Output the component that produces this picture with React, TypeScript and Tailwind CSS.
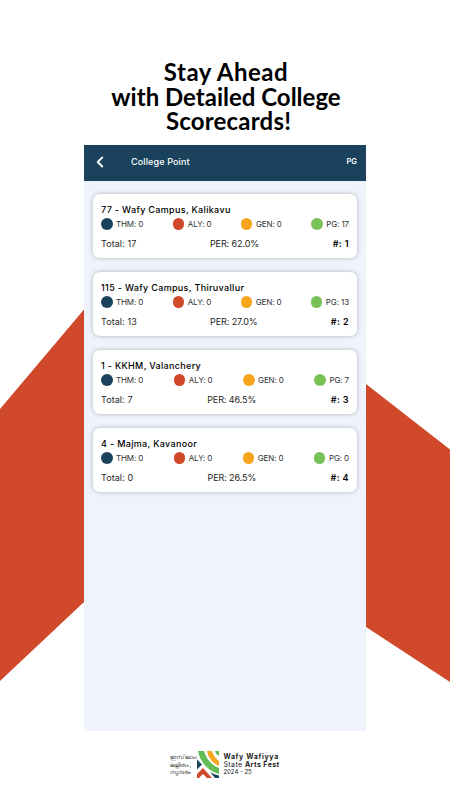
import { FiChevronLeft } from "react-icons/fi";

type College = {
  name: string;
  thm: number;
  aly: number;
  gen: number;
  pg: number;
  total: number;
  per: string;
  rank: number;
};

const colleges: College[] = [
  { name: "77 - Wafy Campus, Kalikavu", thm: 0, aly: 0, gen: 0, pg: 17, total: 17, per: "62.0%", rank: 1 },
  { name: "115 - Wafy Campus, Thiruvallur", thm: 0, aly: 0, gen: 0, pg: 13, total: 13, per: "27.0%", rank: 2 },
  { name: "1 - KKHM, Valanchery", thm: 0, aly: 0, gen: 0, pg: 7, total: 7, per: "46.5%", rank: 3 },
  { name: "4 - Majma, Kavanoor", thm: 0, aly: 0, gen: 0, pg: 0, total: 0, per: "26.5%", rank: 4 },
];

function Score({ color, label, value }: { color: string; label: string; value: number }) {
  return (
    <div className="flex items-center gap-[3.5px]">
      <span className={`size-[11.5px] rounded-full ${color}`} />
      <span className="text-[8px] leading-3 tracking-[-0.12px] text-[#303030]">
        {label}: {value}
      </span>
    </div>
  );
}

function CollegeCard({ college }: { college: College }) {
  return (
    <div className="h-16 rounded-[7px] bg-white px-2 pt-[9px] shadow-[0_0_5px_rgba(0,0,0,0.25)]">
      <h2 className="text-[9px] font-medium leading-[13px] tracking-[0.33px] text-black">{college.name}</h2>
      <div className="mt-[2px] flex h-3 items-center justify-between">
        <Score color="bg-[#1a425d]" label="THM" value={college.thm} />
        <Score color="bg-[#d0492b]" label="ALY" value={college.aly} />
        <Score color="bg-[#f6a51d]" label="GEN" value={college.gen} />
        <Score color="bg-[#77c157]" label="PG" value={college.pg} />
      </div>
      <div className="mt-[7px] flex justify-between text-[9px] leading-[13px] text-[#252525]">
        <span className="tracking-[0.08px]">Total: {college.total}</span>
        <span className="tracking-[-0.1px]">PER: {college.per}</span>
        <span className="font-semibold tracking-[0.4px] text-black">#: {college.rank}</span>
      </div>
    </div>
  );
}

function Logo() {
  return (
    <svg className="h-[27px] w-[22px]" viewBox="0 0 22 27">
      <path d="M0 8.500l5 5-5 5z" fill="#1a425d" />
      <path d="M1 0h6c2 7 7 14 15 17v6C11 20 3 11 1 0z" fill="#62bd55" />
      <path d="M10 0h5c1 4 4 8 7 10v5C15 12 11 6 10 0z" fill="#f6a51d" />
      <path d="M18 0h4v5c-2-1-3.500-3-4-5z" fill="#62bd55" />
      <path d="M0 27v-4l6-6 9 10h-5l-4-4-4 4z" fill="#d0492b" />
      <path d="M13 21c3 2 6 3 9 3.500V27h-4z" fill="#1a425d" />
    </svg>
  );
}

export default function App() {
  return (
    <main className="relative flex h-[800px] w-[450px] flex-col items-center overflow-hidden bg-white font-['Inter',sans-serif]">
      {/* red shapes behind the phone screen */}
      <svg className="absolute inset-0 h-full w-full" viewBox="0 0 450 800">
        <path d="M0 409 84 309.5V602L0 681zM366 384l84 65.5V682l-84-55z" fill="#d0492b" />
      </svg>

      <h1 className="relative mt-[60px] h-[85px] pl-[2px] text-center font-['Lato',sans-serif] text-[24px] font-bold leading-[24.5px] text-black">
        <span className="tracking-[0.5px]">Stay Ahead</span>
        <br />
        with Detailed College
        <br />
        <span className="pl-[5px] tracking-[0.2px]">Scorecards!</span>
      </h1>

      <section className="relative h-[586px] w-[282px] bg-[#eff3fb]">
        <header className="flex h-9 items-center bg-[#1a425d] pb-[2px] pl-[7px] pr-[9px] text-white">
          <FiChevronLeft className="size-[18px] stroke-[2.5]" />
          <span className="ml-[22px] text-[9px] font-medium tracking-[0.13px]">College Point</span>
          <span className="ml-auto text-[7.5px] font-semibold">PG</span>
        </header>
        <div className="flex flex-col gap-[14px] px-[9px] pt-[13px]">
          {colleges.map((college) => (
            <CollegeCard key={college.rank} college={college} />
          ))}
        </div>
      </section>

      <footer className="relative mt-5 flex items-center">
        <div className="w-[27px] text-[6px] leading-[7.5px] text-[#333]">
          <p className="whitespace-nowrap tracking-[-0.2px]">ഇസ്‌ലാം:</p>
          <p>ലളിതം,</p>
          <p>സുന്ദരം</p>
        </div>
        <Logo />
        <div className="ml-[4px] whitespace-nowrap text-[7px] leading-[7.5px] text-[#222]">
          <p className="font-bold tracking-[0.65px]">Wafy Wafiyya</p>
          <p className="tracking-[0.42px]">
            State <b>Arts Fest</b>
          </p>
          <p className="text-[6px]">2024 - 25</p>
        </div>
      </footer>
    </main>
  );
}
